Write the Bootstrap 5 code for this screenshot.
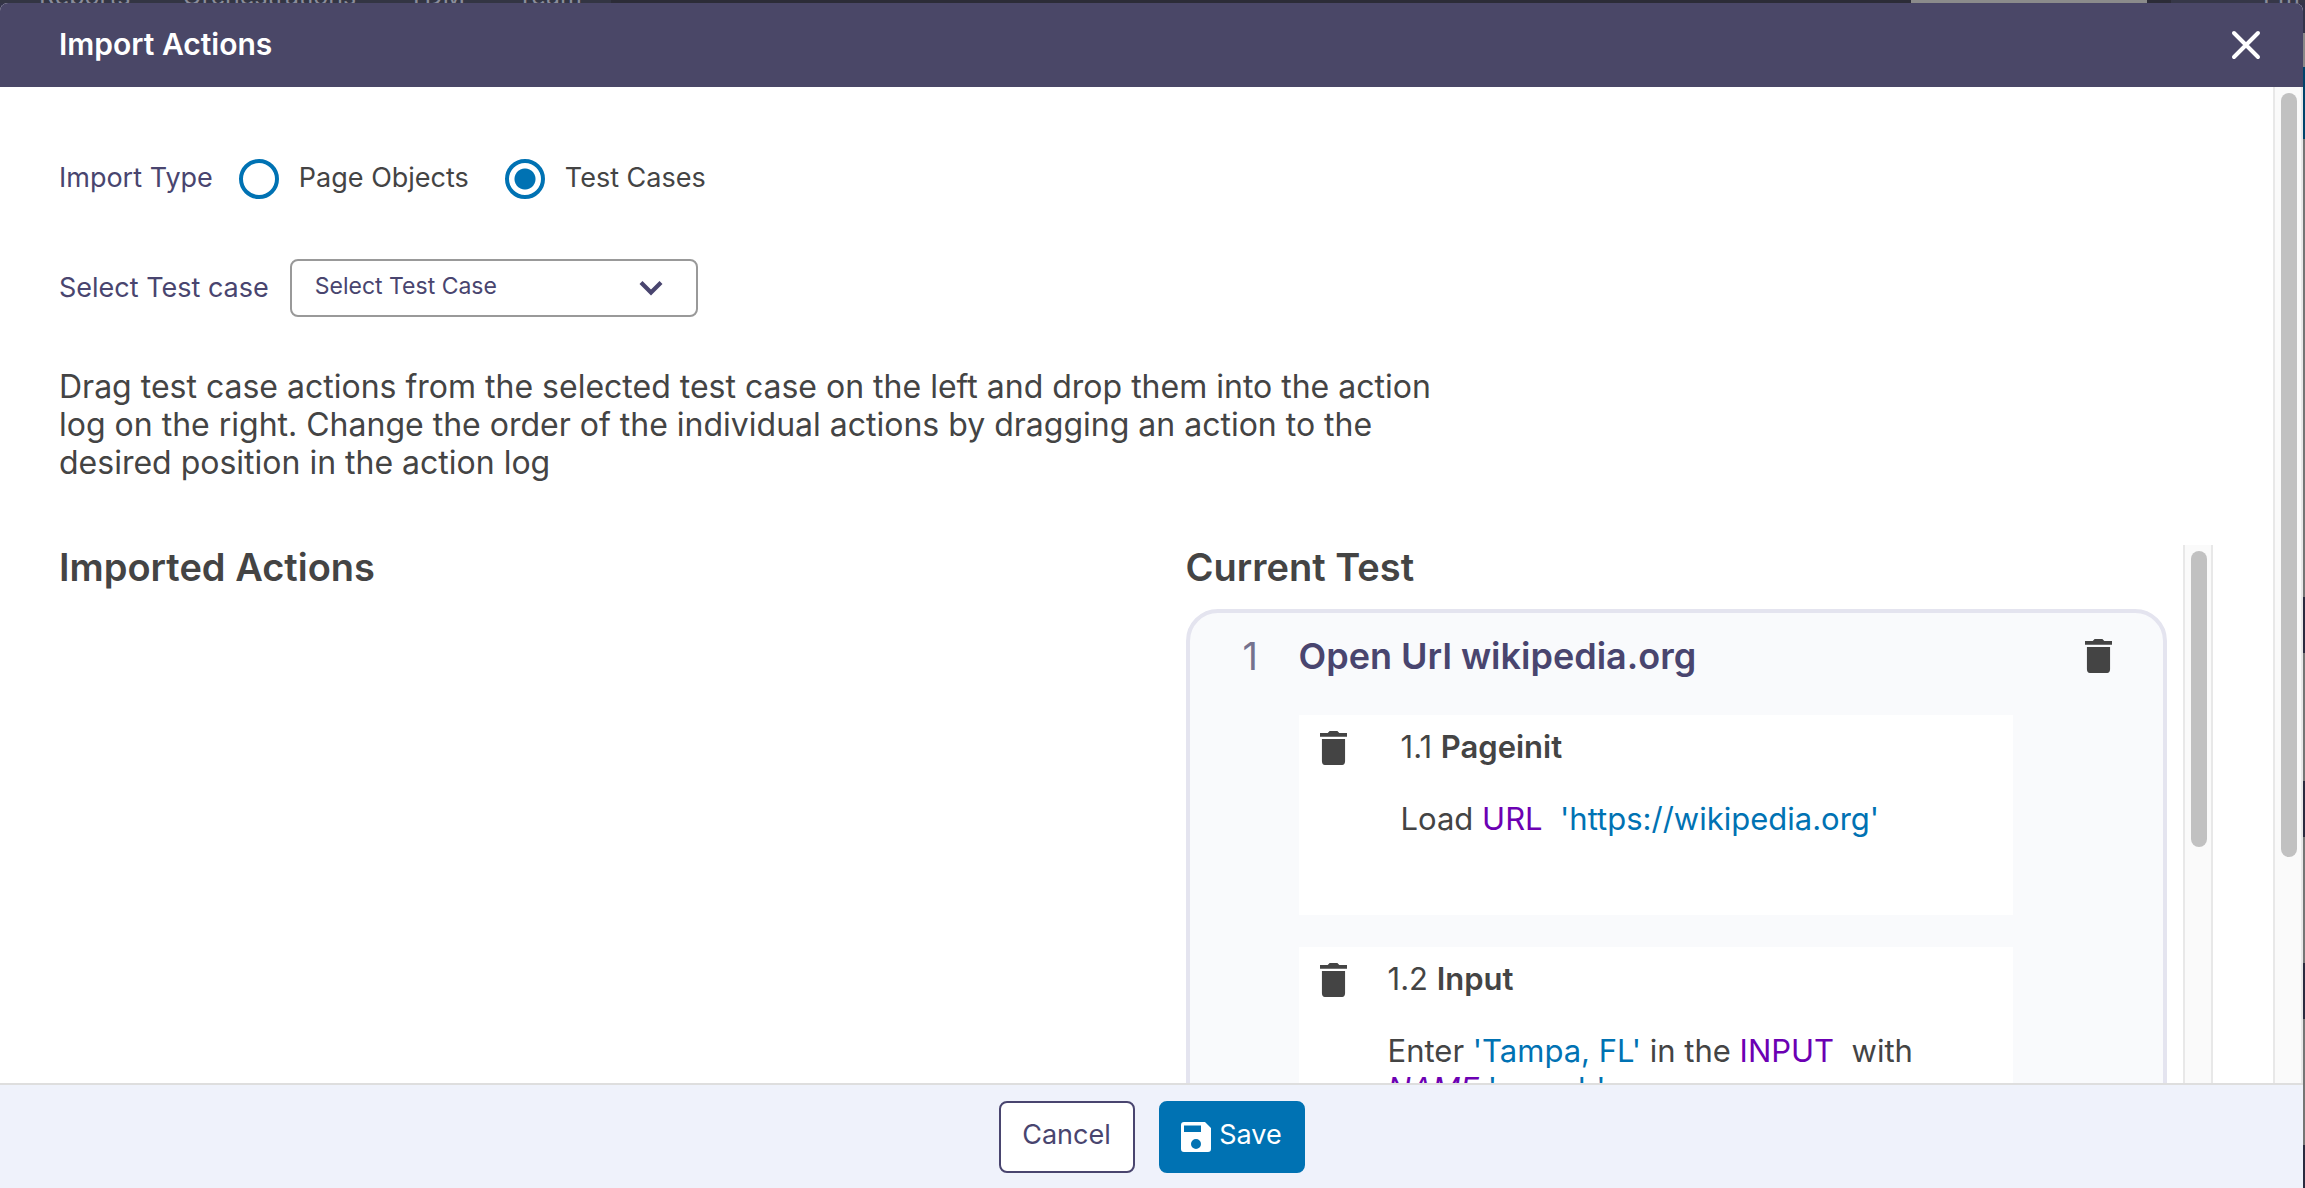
<!DOCTYPE html>
<html lang="en">
<head>
<meta charset="utf-8">
<meta name="viewport" content="width=device-width, initial-scale=1">
<title>Import Actions</title>
<link href="https://cdn.jsdelivr.net/npm/bootstrap@5.3.0/dist/css/bootstrap.min.css" rel="stylesheet">
<style>
  :root { --ink: #444; --plum: #49456f; --blue: #0072b3; --violet: #6c00b3; }
  body { font-family: Inter, Roboto, sans-serif; color: var(--ink); background: #757575; }
  .page-behind { inset: 0; z-index: 0; background:
      linear-gradient(#2b2b3f, #2b2b3f) right 597px / 4px 56px no-repeat,
      linear-gradient(#2b2b3f, #2b2b3f) right 781px / 4px 56px no-repeat,
      linear-gradient(#2b2b3f, #2b2b3f) right 963px / 4px 56px no-repeat,
      linear-gradient(#2b2b3f, #2b2b3f) right 1145px / 4px 56px no-repeat,
      linear-gradient(#34344a 33px, #888 33px 67px, #00446b 67px 139px, #757575 139px); }
  .top-strip { height: 3px; background: #2c2c37; font-size: 25px; line-height: 25px; color: #8a8d9b; }
  .strip-links { width: 611px; padding-left: 39px; gap: 52px; background: #333543; }
  .top-strip span { margin-bottom: -6px; }
  .strip-search { width: 236px; background: #8b8b8b; margin-right: 24px; }
  .strip-user { width: 134px; background: #363748; padding-left: 92px; }
  .dialog-shell { position: relative; z-index: 1; height: calc(100vh - 3px); margin-right: 2px; background: #fff; border-radius: 8px 8px 0 0; overflow: hidden; }
  .dialog-head { height: 84px; padding: 0 42px 0 59px; background: #4a4767; color: #fff; }
  .dialog-title { font-size: 30px; line-height: 38px; font-weight: 600; padding-bottom: 3px; }
  .icon-btn { border: 0; background: none; padding: 0; color: inherit; line-height: 0; }
  .form-area { padding: 72px 60px 0 59px; min-height: 0; }
  .form-text-lg { font-size: 27px; line-height: 36px; }
  .plum { color: var(--plum); }
  .type-row { height: 40px; margin-bottom: 60px; gap: 26px; }
  .radio-pair { gap: 20px; margin-right: 10px; }
  .type-row label, .type-caption { padding-bottom: 3px; margin: 0; }
  .radio-lg.form-check-input { width: 40px; height: 40px; margin: 0; border: 4px solid var(--blue); background: #fff; box-shadow: none; }
  .radio-lg.form-check-input:checked { background: radial-gradient(circle, var(--blue) 10px, #fff 11px); }
  .case-row { margin-bottom: 51px; gap: 21px; }
  .case-select { width: 408px; }
  .case-select select { height: 58px; padding: 0 24px 3px 23px; border: 2px solid #999; border-radius: 8px; font-size: 23px; color: var(--plum); background: #fff; }
  .case-select svg { position: absolute; right: 34px; top: 20px; pointer-events: none; }
  .hint { font-size: 32px; line-height: 38px; max-width: 1400px; margin-bottom: 63px; }
  .panes { min-height: 0; }
  .pane-left { width: 52.3%; }
  .pane-title { font-size: 38px; line-height: 44px; font-weight: 600; margin-bottom: 20px; }
  .scroll-track { width: 30px; flex: none; background: #fafafa; border: solid #e8e8e8; border-width: 0 2px; padding: 6px 6px 0; }
  .scroll-thumb { width: 16px; border-radius: 8px; background: #c1c1c1; }
  .test-card { border: 4px solid #e4e4ef; border-radius: 32px; background: #f9fafc; padding: 21px 51px 60px 53px; }
  .step-no { width: 56px; font-size: 38px; line-height: 44px; color: #75728e; }
  .step-head { margin-bottom: 37px; }
  .step-title { font-size: 36px; line-height: 44px; font-weight: 600; color: var(--plum); margin: 0; }
  .action-box { background: #fff; min-height: 200px; margin: 0 99px 32px 56px; padding: 13px 21px; font-size: 31px; line-height: 38px; }
  .action-box .icon-btn { padding-top: 3px; }
  .action-one { gap: 54px; }
  .action-two { gap: 41px; }
  .action-name { margin-bottom: 34px; }
  .action-name b { font-weight: 600; }
  .action-text { max-width: 560px; margin: 0; }
  .tag-name { color: var(--violet); }
  .tag-value { color: var(--blue); }
  .dialog-foot { height: 105px; background: #eff2fb; border-top: 2px solid #dedede; padding-top: 16px; gap: 24px; }
  .foot-btn { height: 72px; border: 2px solid var(--plum); border-radius: 8px; font-size: 27px; line-height: 34px; color: var(--plum); background: #fff; }
  .foot-btn.cancel { width: 136px; padding: 0 0 4px; }
  .foot-btn.save { width: 146px; padding: 0; gap: 8px; border-color: var(--blue); background: var(--blue); color: #fff; }
  .foot-btn.save span { padding-bottom: 4px; }
</style>
</head>
<body class="vh-100 overflow-hidden">
<svg width="0" height="0" class="position-absolute" aria-hidden="true">
  <symbol id="trash" viewBox="5 3 14 18" preserveAspectRatio="none"><path d="M6 19c0 1.100.600 2 1.500 2h9c.900 0 1.500-.9 1.500-2V7.200H6v11.800zM19 4.100h-4L14 3h-4l-1 1.100H5V6.100h14V4.100z"/></symbol>
</svg>
<div class="page-behind position-fixed" aria-hidden="true"></div>
<nav class="top-strip position-relative d-flex overflow-hidden" aria-hidden="true">
  <div class="strip-links d-flex align-items-end"><span>Reports</span><span>Orchestrations</span><span>TDM</span><span>Team</span></div>
  <div class="strip-search ms-auto"></div>
  <div class="strip-user d-flex align-items-end"><span>Em</span></div>
</nav>

<div class="dialog-shell d-flex flex-column" role="dialog" aria-labelledby="dlgTitle">
  <header class="dialog-head d-flex align-items-center justify-content-between flex-shrink-0">
    <h1 class="dialog-title mb-0" id="dlgTitle">Import Actions</h1>
    <button type="button" class="icon-btn" aria-label="Close">
      <svg width="30" height="30" viewBox="0 0 30 30"><path d="M3 3l24 24M27 3L3 27" stroke="#fff" stroke-width="4" stroke-linecap="round"/></svg>
    </button>
  </header>

  <div class="d-flex flex-grow-1 overflow-hidden">
    <main class="form-area d-flex flex-column flex-grow-1 overflow-hidden">
      <div class="type-row d-flex align-items-center form-text-lg flex-shrink-0" role="radiogroup" aria-labelledby="typeLbl">
        <span id="typeLbl" class="type-caption plum">Import Type</span>
        <div class="radio-pair d-flex align-items-center">
          <input class="form-check-input radio-lg" type="radio" name="type" id="typePage">
          <label for="typePage">Page Objects</label>
        </div>
        <div class="radio-pair d-flex align-items-center">
          <input class="form-check-input radio-lg" type="radio" name="type" id="typeCase" checked>
          <label for="typeCase">Test Cases</label>
        </div>
      </div>
      <div class="case-row d-flex align-items-center form-text-lg flex-shrink-0">
        <label class="plum" for="caseSel">Select Test case</label>
        <div class="case-select position-relative">
          <select class="form-select" id="caseSel"><option>Select Test Case</option></select>
          <svg width="26" height="18" viewBox="0 0 26 18" fill="none"><path d="M3 3.500l10 10 10-10" stroke="#49456f" stroke-width="4.200"/></svg>
        </div>
      </div>
      <p class="hint flex-shrink-0">Drag test case actions from the selected test case on the left and drop them into the action log on the right. Change the order of the individual actions by dragging an action to the desired position in the action log</p>

      <div class="panes d-flex flex-grow-1 overflow-hidden">
        <section class="pane-left flex-shrink-0"><h2 class="pane-title">Imported Actions</h2></section>
        <section class="d-flex flex-grow-1 gap-3">
          <div class="flex-grow-1">
            <h2 class="pane-title">Current Test</h2>
            <article class="test-card">
              <div class="step-head d-flex align-items-center">
                <span class="step-no">1</span>
                <h3 class="step-title flex-grow-1">Open Url wikipedia.org</h3>
                <button type="button" class="icon-btn" aria-label="Delete step"><svg width="27" height="34" fill="currentColor"><use href="#trash"/></svg></button>
              </div>
              <div class="action-box action-one d-flex align-items-start">
                <button type="button" class="icon-btn" aria-label="Delete action 1.1"><svg width="27" height="34" fill="currentColor"><use href="#trash"/></svg></button>
                <div>
                  <div class="action-name">1.1 <b>Pageinit</b></div>
                  <p class="action-text">Load <span class="tag-name">URL</span>&nbsp; <span class="tag-value">'https://wikipedia.org'</span></p>
                </div>
              </div>
              <div class="action-box action-two d-flex align-items-start">
                <button type="button" class="icon-btn" aria-label="Delete action 1.2"><svg width="27" height="34" fill="currentColor"><use href="#trash"/></svg></button>
                <div>
                  <div class="action-name">1.2 <b>Input</b></div>
                  <p class="action-text">Enter <span class="tag-value">'Tampa, FL'</span> in the <span class="tag-name">INPUT</span>&nbsp; with <em class="tag-name">NAME</em> <span class="tag-value">'search'</span></p>
                </div>
              </div>
            </article>
          </div>
          <div class="scroll-track"><div class="scroll-thumb" style="height:296px"></div></div>
        </section>
      </div>
    </main>
    <div class="scroll-track"><div class="scroll-thumb" style="height:764px"></div></div>
  </div>

  <footer class="dialog-foot d-flex justify-content-center align-items-start flex-shrink-0">
    <button type="button" class="foot-btn cancel">Cancel</button>
    <button type="button" class="foot-btn save d-flex align-items-center justify-content-center">
      <svg width="30" height="30" viewBox="0 0 30 30"><path fill="#fff" fill-rule="evenodd" d="M3 0h21l6 6v21a3 3 0 0 1-3 3H3a3 3 0 0 1-3-3V3a3 3 0 0 1 3-3zM3 3.500v6.500h17V3.500zM15 17a5 5 0 1 0 0 10 5 5 0 0 0 0-10z"/></svg>
      <span>Save</span>
    </button>
  </footer>
</div>
<script src="https://cdn.jsdelivr.net/npm/bootstrap@5.3.0/dist/js/bootstrap.bundle.min.js"></script>
</body>
</html>
